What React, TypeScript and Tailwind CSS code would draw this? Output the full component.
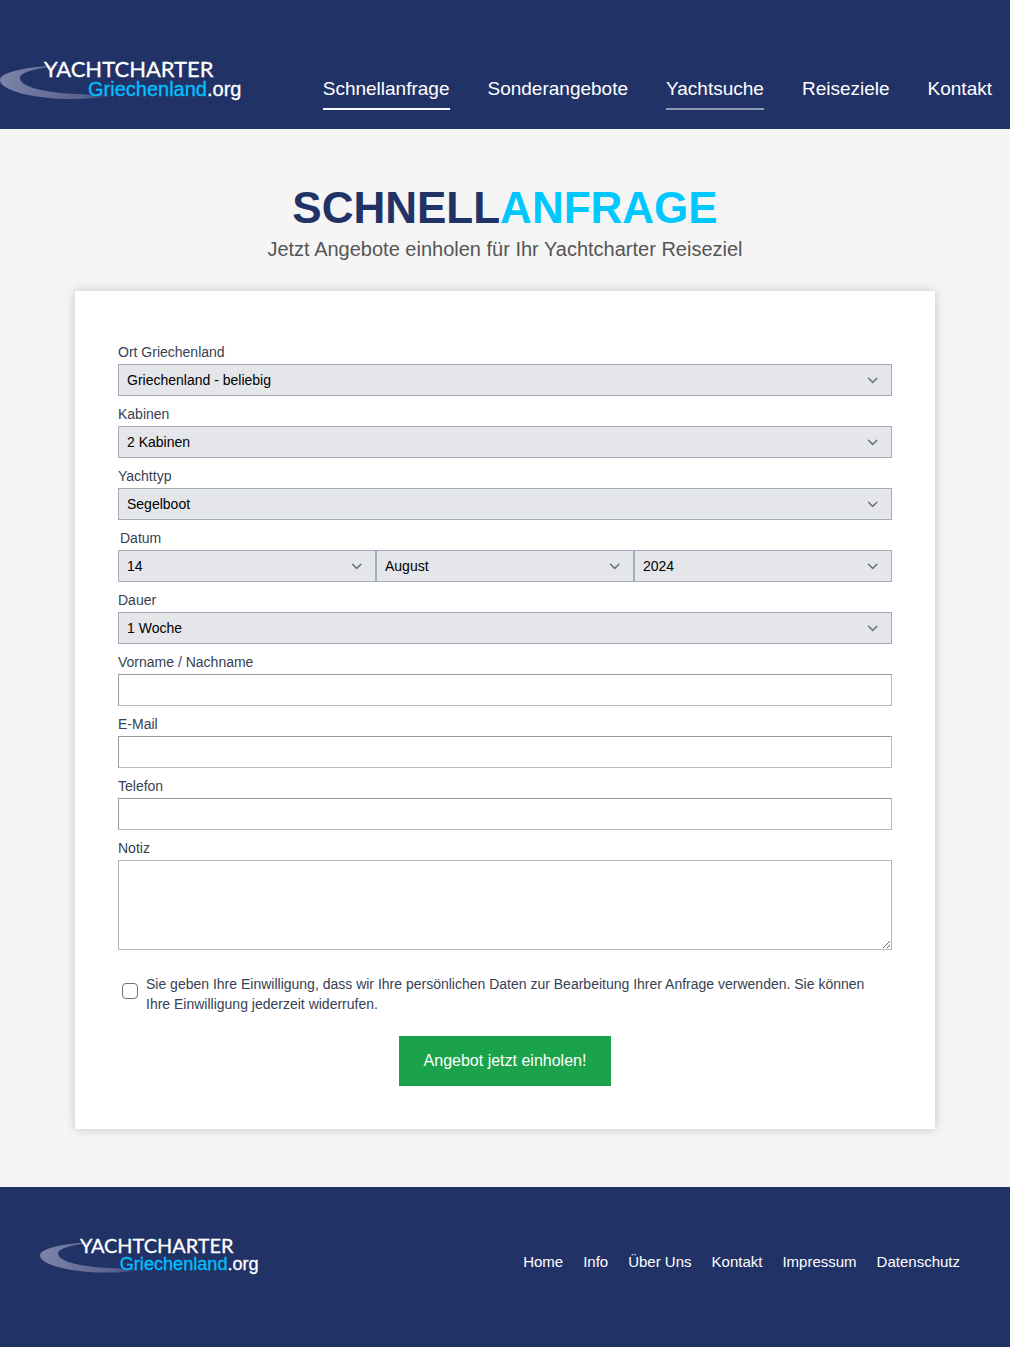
import { useId, type ReactNode } from 'react'

function Logo({ className }: { className: string }) {
  const fade = useId()
  return (
    <svg viewBox="0 -8 245 58" role="img" aria-label="Yachtcharter Griechenland.org" className={className}>
      <defs>
        <linearGradient id={fade} x1="0" y1="0" x2="1" y2="0">
          <stop offset="0" stopColor="#7d84a8" />
          <stop offset="0.4" stopColor="#69719a" />
          <stop offset="0.75" stopColor="#69719a" stopOpacity="0.75" />
          <stop offset="1" stopColor="#69719a" stopOpacity="0" />
        </linearGradient>
      </defs>
      <path
        d="M66 5C34 6 0 11 0 20C0 31 36 39 72 39C88 39 102 38 112 36L112 34C100 35 92 35 78 34C46 33 20 27 20 18C20 11 44 7 66 5Z"
        fill={`url(#${fade})`}
      />
      <text x="44" y="17" fontSize="22" fill="#ffffff" fontFamily="Lato, sans-serif" stroke="#ffffff" strokeWidth="0.3">
        YACHTCHARTER
      </text>
      <text
        x="88"
        y="36"
        fontSize="20"
        fill="#00c0ff"
        fontFamily="'Liberation Sans', Arial, sans-serif"
        stroke="#00c0ff"
        strokeWidth="0.3"
      >
        Griechenland
        <tspan fill="#ffffff" stroke="#ffffff">.org</tspan>
      </text>
    </svg>
  )
}

const mainLinks = [
  { label: 'Schnellanfrage', line: 'border-white' },
  { label: 'Sonderangebote', line: 'border-transparent' },
  { label: 'Yachtsuche', line: 'border-white/50' },
  { label: 'Reiseziele', line: 'border-transparent' },
  { label: 'Kontakt', line: 'border-transparent' },
]

const footerLinks = ['Home', 'Info', 'Über Uns', 'Kontakt', 'Impressum', 'Datenschutz']

const days = Array.from({ length: 31 }, (_, i) => String(i + 1))
const months = [
  'Januar', 'Februar', 'März', 'April', 'Mai', 'Juni',
  'Juli', 'August', 'September', 'Oktober', 'November', 'Dezember',
]

type SelectProps = { id?: string; label?: string; value: string; options: string[] }

function Select({ id, label, value, options }: SelectProps) {
  return (
    <div className="relative flex-1">
      <select
        id={id}
        aria-label={label}
        defaultValue={value}
        className="block h-8 w-full appearance-none border border-[#a5abb8] bg-[#e5e6ea] px-2 text-sm text-black"
      >
        {options.map((o) => (
          <option key={o}>{o}</option>
        ))}
      </select>
      <svg
        viewBox="0 0 20 20"
        className="pointer-events-none absolute top-1.5 right-[9px] size-5"
        fill="none"
        stroke="#6b7280"
        strokeWidth="1.5"
        strokeLinecap="round"
        strokeLinejoin="round"
      >
        <path d="M5.5 8.2l4.2 4.2 4.2-4.2" />
      </svg>
    </div>
  )
}

function Field({ id, label, children }: { id: string; label: string; children: ReactNode }) {
  return (
    <div className="mt-2">
      <label htmlFor={id} className="mb-0.5 block text-sm">
        {label}
      </label>
      {children}
    </div>
  )
}

function TextField({ id, label, type }: { id: string; label: string; type: string }) {
  return (
    <Field id={id} label={label}>
      <input
        id={id}
        type={type}
        className="block h-8 w-full border border-t-[#9a9a9e] border-r-[#b8b9be] border-b-[#b8b9be] border-l-[#9a9a9e] bg-white px-2 text-sm text-black"
      />
    </Field>
  )
}

export default function App() {
  return (
    <div className="min-h-screen bg-[#f5f5f5] font-['Liberation_Sans',Arial,sans-serif]">
      <header className="flex items-end justify-between bg-[#213267] pt-[52px] pr-[18px] pb-[19px]">
        <a href="#home">
          <Logo className="block w-[245px]" />
        </a>
        <nav className="flex gap-[38px] text-[19px] leading-[26px] text-white">
          {mainLinks.map(({ label, line }) => (
            <a key={label} href="#" className={`border-b-2 pb-1.5 ${line}`}>
              {label}
            </a>
          ))}
        </nav>
      </header>

      <main className="px-4 pt-[54px] pb-[58px]">
        <h1 className="text-center text-[44px] leading-[50px] font-bold text-[#213267]">
          SCHNELL<span className="text-[#00c8ff]">ANFRAGE</span>
        </h1>
        <p className="text-center text-xl leading-8 text-[#555555]">
          Jetzt Angebote einholen für Ihr Yachtcharter Reiseziel
        </p>

        <form
          className="mx-auto mt-[26px] max-w-[860px] bg-white p-[43px] text-gray-700 shadow-[0_0_10px_rgba(0,0,0,0.2)]"
          onSubmit={(e) => e.preventDefault()}
        >
          <Field id="ort" label="Ort Griechenland">
            <Select id="ort" value="Griechenland - beliebig" options={['Griechenland - beliebig']} />
          </Field>
          <Field id="kabinen" label="Kabinen">
            <Select id="kabinen" value="2 Kabinen" options={['1 Kabine', '2 Kabinen', '3 Kabinen', '4 Kabinen']} />
          </Field>
          <Field id="yachttyp" label="Yachttyp">
            <Select id="yachttyp" value="Segelboot" options={['Segelboot', 'Katamaran', 'Motorboot']} />
          </Field>
          <fieldset className="mt-2">
            <legend className="mb-0.5 px-0.5 text-sm">Datum</legend>
            <div className="flex">
              <Select label="Tag" value="14" options={days} />
              <Select label="Monat" value="August" options={months} />
              <Select label="Jahr" value="2024" options={['2024', '2025', '2026']} />
            </div>
          </fieldset>
          <Field id="dauer" label="Dauer">
            <Select id="dauer" value="1 Woche" options={['1 Woche', '2 Wochen', '3 Wochen']} />
          </Field>
          <TextField id="name" label="Vorname / Nachname" type="text" />
          <TextField id="email" label="E-Mail" type="email" />
          <TextField id="telefon" label="Telefon" type="tel" />
          <Field id="notiz" label="Notiz">
            <textarea
              id="notiz"
              className="block h-[90px] w-full resize-y border border-[#b3b5bf] bg-white px-2 py-1 text-sm text-black"
            />
          </Field>

          <div className="mt-6 flex items-start gap-2 pr-4 pl-1">
            <input
              id="einwilligung"
              type="checkbox"
              className="mt-[9px] size-4 shrink-0 appearance-none rounded border border-gray-500 bg-white checked:bg-[#213267]"
            />
            <label htmlFor="einwilligung" className="text-sm">
              Sie geben Ihre Einwilligung, dass wir Ihre persönlichen Daten zur Bearbeitung Ihrer Anfrage verwenden. Sie
              können Ihre Einwilligung jederzeit widerrufen.
            </label>
          </div>

          <button type="submit" className="mx-auto mt-[22px] block h-[50px] bg-[#1aa34a] px-[25px] text-base text-white">
            Angebot jetzt einholen!
          </button>
        </form>
      </main>

      <footer className="flex items-center justify-between bg-[#213267] pt-[43px] pr-[50px] pb-16 pl-10">
        <a href="#home">
          <Logo className="block w-[222px]" />
        </a>
        <nav className="flex gap-5 pt-3 text-[15px] leading-5 text-white">
          {footerLinks.map((label) => (
            <a key={label} href="#">
              {label}
            </a>
          ))}
        </nav>
      </footer>
    </div>
  )
}
